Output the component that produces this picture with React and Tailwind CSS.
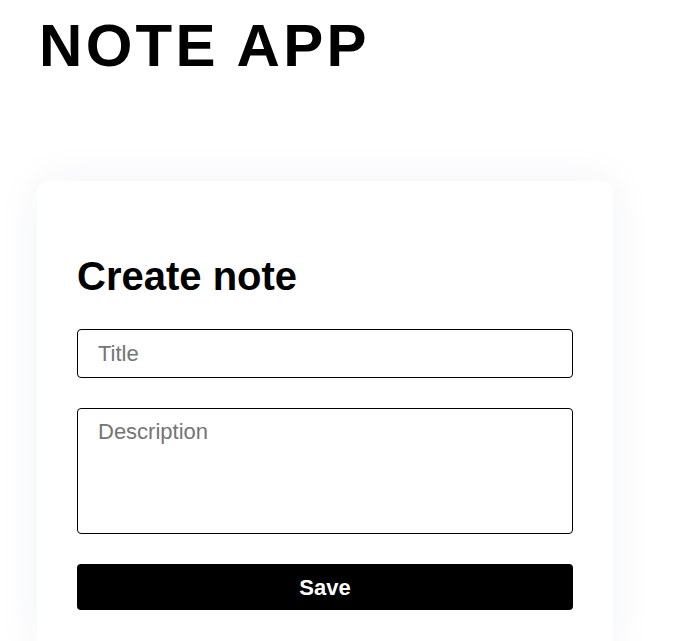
export default function App() {
  return (
    <div className="min-h-screen bg-white px-[37px] pt-[11px] font-['Liberation_Sans',Arial,sans-serif] text-black">
      <h1 className="pl-[2px] text-[60px] leading-[1.15] font-bold tracking-[3.3px]">NOTE APP</h1>

      {/* Form card */}
      <div className="mt-[101px] w-[576px] rounded-[10px] bg-white px-10 pt-[72px] pb-10 shadow-[0_0_45px_rgba(40,50,120,0.06)]">
        <h2 className="text-[40px] leading-[1.15] font-bold">Create note</h2>
        <form className="mt-[30px] flex flex-col gap-[30px]" onSubmit={(e) => e.preventDefault()}>
          <input
            type="text"
            placeholder="Title"
            className="h-[49px] w-full rounded-[4px] border border-black px-5 text-[22px] outline-none placeholder:text-[#757575]"
          />
          <textarea
            placeholder="Description"
            className="block h-[126px] w-full resize-none rounded-[4px] border border-black px-5 pt-[10px] text-[22px] leading-[1.15] outline-none placeholder:text-[#757575]"
          />
          <button
            type="submit"
            className="h-[46px] w-full rounded-[4px] bg-black text-[22px] font-bold text-white"
          >
            Save
          </button>
        </form>
      </div>
    </div>
  )
}
